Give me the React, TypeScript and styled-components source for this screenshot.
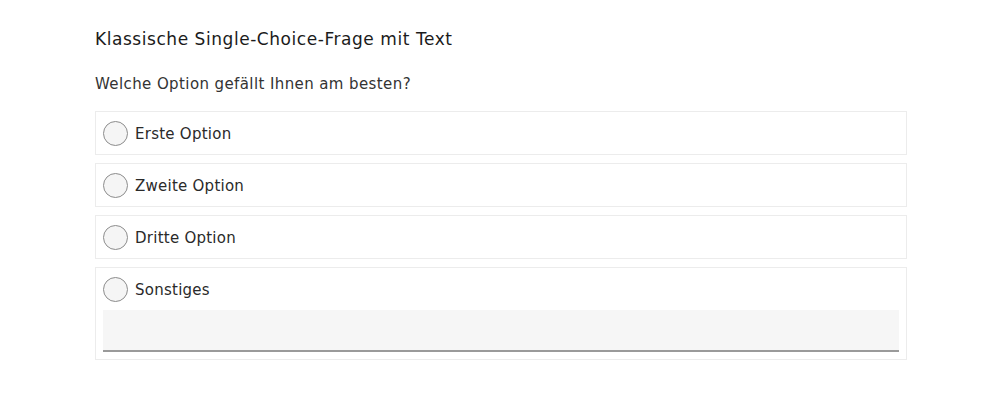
import React, { useState } from 'react';
import styled, { createGlobalStyle } from 'styled-components';

const GlobalStyle = createGlobalStyle`
  body {
    margin: 0;
    background: #ffffff;
    font-family: "DejaVu Sans", "Noto Sans", Arial, sans-serif;
  }
`;

const Page = styled.div`
  width: 1000px;
  height: 404px;
  box-sizing: border-box;
  padding: 27px 93px 0 95px;
`;

const Title = styled.h2`
  margin: 0;
  font-size: 17px;
  font-weight: 400;
  letter-spacing: 0.55px;
  line-height: 24px;
  color: #1b1b1b;
`;

const Question = styled.p`
  margin: 22px 0 16px;
  font-size: 15px;
  letter-spacing: 0.4px;
  line-height: 22px;
  color: #333333;
`;

const OptionList = styled.div`
  display: flex;
  flex-direction: column;
  gap: 8px;
`;

const OptionBox = styled.label`
  display: flex;
  flex-direction: column;
  gap: 7px;
  box-sizing: border-box;
  border: 1px solid #ececec;
  padding: 8px 7px 7px;
  cursor: pointer;
`;

const OptionRow = styled.div`
  display: flex;
  align-items: center;
  gap: 7px;
  height: 27px;
`;

const Radio = styled.span<{ $checked: boolean }>`
  width: 23px;
  height: 23px;
  border-radius: 50%;
  border: 1px solid #8c8c8c;
  background: #f5f5f5;
  position: relative;
  flex: none;

  &::after {
    content: '';
    display: ${(p) => (p.$checked ? 'block' : 'none')};
    position: absolute;
    inset: 6px;
    border-radius: 50%;
    background: #333;
  }
`;

const OptionText = styled.span`
  font-size: 15px;
  letter-spacing: 0.25px;
  color: #2a2a2a;
`;

const OtherInput = styled.input`
  height: 42px;
  box-sizing: border-box;
  border: none;
  border-bottom: 2px solid #9a9a9a;
  background: #f6f6f6;
  font: inherit;
  font-size: 15px;
  padding: 0 10px;
  outline: none;
`;

const options = ['Erste Option', 'Zweite Option', 'Dritte Option', 'Sonstiges'];

export default function App() {
  const [selected, setSelected] = useState<string | null>(null);

  return (
    <>
      <GlobalStyle />
      <Page>
        <Title>Klassische Single-Choice-Frage mit Text</Title>
        <Question>Welche Option gefällt Ihnen am besten?</Question>
        <OptionList>
          {options.map((opt) => (
            <OptionBox key={opt} onClick={() => setSelected(opt)}>
              <OptionRow>
                <Radio $checked={selected === opt} />
                <OptionText>{opt}</OptionText>
              </OptionRow>
              {opt === 'Sonstiges' && <OtherInput type="text" />}
            </OptionBox>
          ))}
        </OptionList>
      </Page>
    </>
  );
}
